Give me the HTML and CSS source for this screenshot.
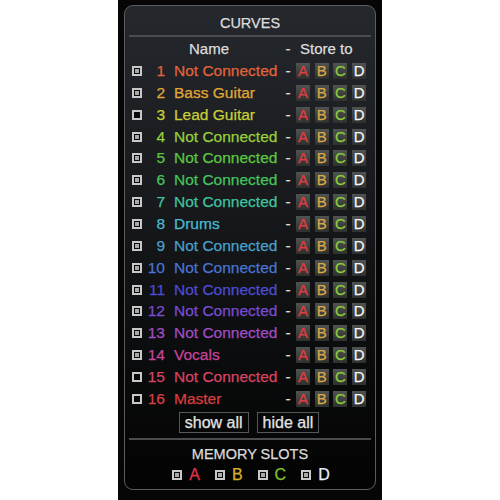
FILE: index.html
```html
<!DOCTYPE html>
<html>
<head>
<meta charset="utf-8">
<link rel="stylesheet" href="styles.css">
</head>
<body>
<div class="column">
  <div class="panel">
    <div class="title">CURVES</div>
    <div class="sep"></div>
    <div class="head">
      <span class="head-name">Name</span>
      <span class="head-dash">-</span>
      <span class="head-store">Store to</span>
    </div>
    <div class="rows">
      <div class="row c1"><span class="cb on"></span><span class="num">1</span><span class="name">Not Connected</span><span class="dash">-</span><span class="slots"><span class="sl a">A</span><span class="sl b">B</span><span class="sl c">C</span><span class="sl d">D</span></span></div>
      <div class="row c2"><span class="cb on"></span><span class="num">2</span><span class="name">Bass Guitar</span><span class="dash">-</span><span class="slots"><span class="sl a">A</span><span class="sl b">B</span><span class="sl c">C</span><span class="sl d">D</span></span></div>
      <div class="row c3"><span class="cb"></span><span class="num">3</span><span class="name">Lead Guitar</span><span class="dash">-</span><span class="slots"><span class="sl a">A</span><span class="sl b">B</span><span class="sl c">C</span><span class="sl d">D</span></span></div>
      <div class="row c4"><span class="cb on"></span><span class="num">4</span><span class="name">Not Connected</span><span class="dash">-</span><span class="slots"><span class="sl a">A</span><span class="sl b">B</span><span class="sl c">C</span><span class="sl d">D</span></span></div>
      <div class="row c5"><span class="cb on"></span><span class="num">5</span><span class="name">Not Connected</span><span class="dash">-</span><span class="slots"><span class="sl a">A</span><span class="sl b">B</span><span class="sl c">C</span><span class="sl d">D</span></span></div>
      <div class="row c6"><span class="cb on"></span><span class="num">6</span><span class="name">Not Connected</span><span class="dash">-</span><span class="slots"><span class="sl a">A</span><span class="sl b">B</span><span class="sl c">C</span><span class="sl d">D</span></span></div>
      <div class="row c7"><span class="cb on"></span><span class="num">7</span><span class="name">Not Connected</span><span class="dash">-</span><span class="slots"><span class="sl a">A</span><span class="sl b">B</span><span class="sl c">C</span><span class="sl d">D</span></span></div>
      <div class="row c8"><span class="cb on"></span><span class="num">8</span><span class="name">Drums</span><span class="dash">-</span><span class="slots"><span class="sl a">A</span><span class="sl b">B</span><span class="sl c">C</span><span class="sl d">D</span></span></div>
      <div class="row c9"><span class="cb on"></span><span class="num">9</span><span class="name">Not Connected</span><span class="dash">-</span><span class="slots"><span class="sl a">A</span><span class="sl b">B</span><span class="sl c">C</span><span class="sl d">D</span></span></div>
      <div class="row c10"><span class="cb on"></span><span class="num">10</span><span class="name">Not Connected</span><span class="dash">-</span><span class="slots"><span class="sl a">A</span><span class="sl b">B</span><span class="sl c">C</span><span class="sl d">D</span></span></div>
      <div class="row c11"><span class="cb on"></span><span class="num">11</span><span class="name">Not Connected</span><span class="dash">-</span><span class="slots"><span class="sl a">A</span><span class="sl b">B</span><span class="sl c">C</span><span class="sl d">D</span></span></div>
      <div class="row c12"><span class="cb on"></span><span class="num">12</span><span class="name">Not Connected</span><span class="dash">-</span><span class="slots"><span class="sl a">A</span><span class="sl b">B</span><span class="sl c">C</span><span class="sl d">D</span></span></div>
      <div class="row c13"><span class="cb on"></span><span class="num">13</span><span class="name">Not Connected</span><span class="dash">-</span><span class="slots"><span class="sl a">A</span><span class="sl b">B</span><span class="sl c">C</span><span class="sl d">D</span></span></div>
      <div class="row c14"><span class="cb on"></span><span class="num">14</span><span class="name">Vocals</span><span class="dash">-</span><span class="slots"><span class="sl a">A</span><span class="sl b">B</span><span class="sl c">C</span><span class="sl d">D</span></span></div>
      <div class="row c15"><span class="cb"></span><span class="num">15</span><span class="name">Not Connected</span><span class="dash">-</span><span class="slots"><span class="sl a">A</span><span class="sl b">B</span><span class="sl c">C</span><span class="sl d">D</span></span></div>
      <div class="row c16"><span class="cb"></span><span class="num">16</span><span class="name">Master</span><span class="dash">-</span><span class="slots"><span class="sl a">A</span><span class="sl b">B</span><span class="sl c">C</span><span class="sl d">D</span></span></div>
    </div>
    <div class="buttons">
      <span class="btn">show all</span>
      <span class="btn">hide all</span>
    </div>
    <div class="sep sep2"></div>
    <div class="title mem-title">MEMORY SLOTS</div>
    <div class="mem">
      <span class="mslot"><span class="cb on"></span><span class="ml a">A</span></span>
      <span class="mslot"><span class="cb on"></span><span class="ml b">B</span></span>
      <span class="mslot"><span class="cb on"></span><span class="ml c">C</span></span>
      <span class="mslot"><span class="cb on"></span><span class="ml d">D</span></span>
    </div>
  </div>
</div>
</body>
</html>
```

FILE: styles.css
```css
html, body {
  margin: 0;
  padding: 0;
  background: #ffffff;
}
body {
  font-family: "Liberation Sans", Arial, sans-serif;
}
.column {
  margin-left: 118px;
  width: 264px;
  height: 500px;
  box-sizing: border-box;
  padding: 5px 0 0 6px;
  background: #060606;
}
.panel {
  width: 252px;
  height: 485px;
  box-sizing: border-box;
  border: 1px solid #5a5c60;
  border-radius: 9px;
  background: linear-gradient(#25282d 0%, #17191c 40%, #0a0b0c 75%, #030303 100%);
  display: flex;
  flex-direction: column;
  -webkit-text-stroke: 0.25px currentColor;
}
.title {
  padding-top: 9px;
  height: 20px;
  line-height: 16px;
  font-size: 14.5px;
  color: #dcdcdc;
  text-align: center;
}
.sep {
  height: 2px;
  margin: 0 4px;
  background: #4a4c50;
}
.head {
  display: flex;
  height: 23px;
  line-height: 23px;
  font-size: 15px;
  color: #dcdcdc;
  padding-left: 16px;
}
.head-name {
  width: 136px;
  text-align: center;
}
.head-dash {
  margin-left: 6px;
  width: 10px;
  text-align: center;
}
.head-store {
  margin-left: 7px;
}
.rows {
  display: flex;
  flex-direction: column;
}
.row {
  display: flex;
  align-items: center;
  height: 21.87px;
  padding-left: 7px;
  font-size: 15.5px;
}
.cb {
  display: inline-flex;
  align-items: center;
  justify-content: center;
  width: 10px;
  height: 10px;
  box-sizing: border-box;
  border: 2px solid #c8c8c8;
  background: #0a0a0a;
  flex: none;
}
.cb.on::after {
  content: "";
  width: 4px;
  height: 4px;
  background: #a8a8a8;
}
.num {
  width: 23px;
  text-align: right;
}
.name {
  margin-left: 9px;
  width: 109px;
  white-space: nowrap;
}
.dash {
  width: 10px;
  text-align: center;
  color: #dcdcdc;
}
.slots {
  display: flex;
  gap: 4.7px;
  margin-left: 3px;
}
.sl {
  width: 14px;
  height: 16px;
  line-height: 16px;
  font-size: 15px;
  text-align: center;
  background: linear-gradient(#505450, #2e302e);
}
.a { color: #e23c44; }
.b { color: #d8a848; }
.c { color: #8ccc3c; }
.d { color: #f4f6fa; }

.c1 { color: #e0643c; }
.c2 { color: #e0a838; }
.c3 { color: #c8d038; }
.c4 { color: #98d03c; }
.c5 { color: #5cc840; }
.c6 { color: #44c45c; }
.c7 { color: #40c4a0; }
.c8 { color: #48bcd0; }
.c9 { color: #4aa0cc; }
.c10 { color: #4a74d4; }
.c11 { color: #4c4cd4; }
.c12 { color: #7a4cd4; }
.c13 { color: #a24cc4; }
.c14 { color: #c8449c; }
.c15 { color: #d84462; }
.c16 { color: #d83e40; }

.buttons {
  display: flex;
  justify-content: center;
  gap: 8px;
  margin-top: 2px;
  padding-right: 2px;
}
.btn {
  height: 21px;
  line-height: 19px;
  box-sizing: border-box;
  border: 1px solid #55575a;
  padding: 0 5px;
  font-size: 16px;
  color: #e4e4e4;
}
.sep2 {
  margin-top: 5px;
}
.mem-title {
  padding-top: 6px;
  height: 20px;
  line-height: 16px;
}
.mem {
  display: flex;
  justify-content: center;
  gap: 15px;
  height: 18px;
  align-items: center;
  padding-left: 2px;
}
.mslot {
  display: flex;
  align-items: center;
  gap: 7px;
}
.ml {
  font-size: 16px;
}
.ml.a { color: #e23048; }
.ml.b { color: #d8b030; }
.ml.c { color: #80c430; }
.ml.d { color: #e8f0ff; }
```
